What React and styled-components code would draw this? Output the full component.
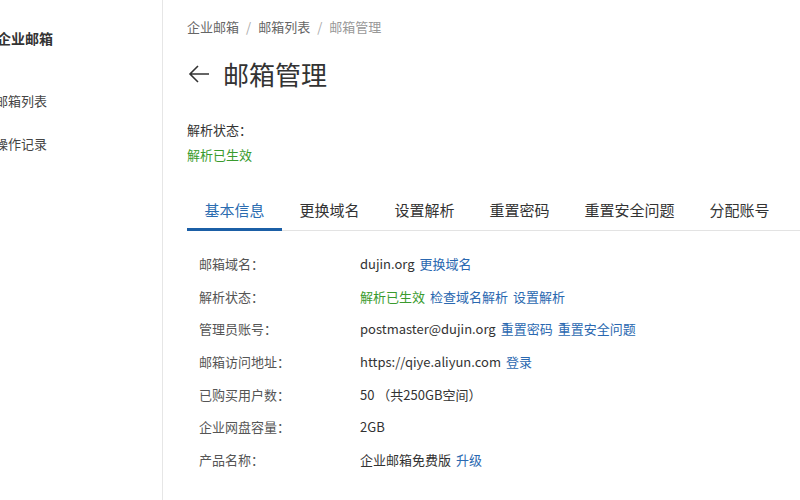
import React from 'react'
import styled, { createGlobalStyle } from 'styled-components'

const GlobalStyle = createGlobalStyle`
    html, body {
        margin: 0;
        padding: 0;
        background: #fff;
        font-family: "Noto Sans CJK SC", "Liberation Sans", sans-serif;
    }
`

const rows = [
    { label: '邮箱域名：', value: 'dujin.org', links: ['更换域名'] },
    { label: '解析状态：', ok: '解析已生效', links: ['检查域名解析', '设置解析'] },
    { label: '管理员账号：', value: 'postmaster@dujin.org', links: ['重置密码', '重置安全问题'] },
    { label: '邮箱访问地址：', value: 'https://qiye.aliyun.com', links: ['登录'] },
    { label: '已购买用户数：', value: '50 （共250GB空间）', links: [] },
    { label: '企业网盘容量：', value: '2GB', links: [] },
    { label: '产品名称：', value: '企业邮箱免费版', links: ['升级'] },
]

const tabs = ['基本信息', '更换域名', '设置解析', '重置密码', '重置安全问题', '分配账号']

function App() {
    return (
        <Page>
            <GlobalStyle />
            <Sidebar>
                <SideTitle>企业邮箱</SideTitle>
                <SideItem>邮箱列表</SideItem>
                <SideItem>操作记录</SideItem>
            </Sidebar>
            <Main>
                <Crumbs>
                    <span>企业邮箱</span>
                    <Sep>/</Sep>
                    <span>邮箱列表</span>
                    <Sep>/</Sep>
                    <CrumbNow>邮箱管理</CrumbNow>
                </Crumbs>
                <Title>
                    <Arrow viewBox="0 0 24 24">
                        <path d="M22 12H3M11 4l-8 8 8 8" />
                    </Arrow>
                    邮箱管理
                </Title>
                <Status>
                    <StatusLabel>解析状态：</StatusLabel>
                    <Green>解析已生效</Green>
                </Status>
                <TabBar>
                    {tabs.map((t, i) => (
                        <Tab key={t} active={i === 0}>{t}</Tab>
                    ))}
                </TabBar>
                <Info>
                    {rows.map(r => (
                        <Row key={r.label}>
                            <Label>{r.label}</Label>
                            <Value>
                                {r.ok && <Green>{r.ok}</Green>}
                                {r.value && <span>{r.value}</span>}
                                {r.links.map(l => <Link key={l}>{l}</Link>)}
                            </Value>
                        </Row>
                    ))}
                </Info>
            </Main>
        </Page>
    )
}

export default App

const Page = styled.div`
    display: flex;
    width: 800px;
    height: 500px;
    overflow: hidden;
    background: #fff;
`

const Sidebar = styled.div`
    width: 162px;
    flex-shrink: 0;
    border-right: 1px solid #e6e6e6;
    padding-top: 27px;
    overflow: hidden;
`

const SideTitle = styled.div`
    margin-left: -3px;
    font-size: 14px;
    font-weight: bold;
    color: #333;
    line-height: 22px;
    margin-bottom: 42px;
`

const SideItem = styled.div`
    margin-left: -5px;
    font-size: 13px;
    color: #444;
    line-height: 20px;
    margin-bottom: 23px;
`

const Main = styled.div`
    flex: 1;
    padding: 17px 0 0 24px;
    overflow: hidden;
`

const Crumbs = styled.div`
    display: flex;
    align-items: center;
    gap: 7px;
    font-size: 13px;
    color: #666;
    line-height: 20px;
`

const Sep = styled.span`
    color: #aaa;
`

const CrumbNow = styled.span`
    color: #999;
`

const Title = styled.div`
    display: flex;
    align-items: center;
    gap: 12px;
    margin-top: 19px;
    font-size: 26px;
    color: #333;
    line-height: 36px;
`

const Arrow = styled.svg`
    width: 24px;
    height: 24px;
    fill: none;
    stroke: #333;
    stroke-width: 1.6;
`

const Status = styled.div`
    margin-top: 25px;
    font-size: 13px;
    line-height: 25px;
`

const StatusLabel = styled.div`
    color: #333;
`

const Green = styled.span`
    color: #3a9b2e;
`

const TabBar = styled.div`
    display: flex;
    margin-top: 25px;
    border-bottom: 1px solid #e3e3e3;
    white-space: nowrap;
`

const Tab = styled.div`
    padding: 0 17.5px;
    font-size: 15px;
    line-height: 36px;
    color: ${p => (p.active ? '#2b6cb0' : '#333')};
    border-bottom: 3px solid ${p => (p.active ? '#1b5fa6' : 'transparent')};
    margin-bottom: -1px;
`

const Info = styled.div`
    padding: 23px 0 0 12px;
`

const Row = styled.div`
    display: flex;
    font-size: 13px;
    line-height: 20px;
    height: 32.7px;
`

const Label = styled.div`
    width: 161px;
    color: #555;
`

const Value = styled.div`
    display: flex;
    gap: 5px;
    color: #333;
    white-space: nowrap;
`

const Link = styled.span`
    color: #2a68b0;
    cursor: pointer;
`
